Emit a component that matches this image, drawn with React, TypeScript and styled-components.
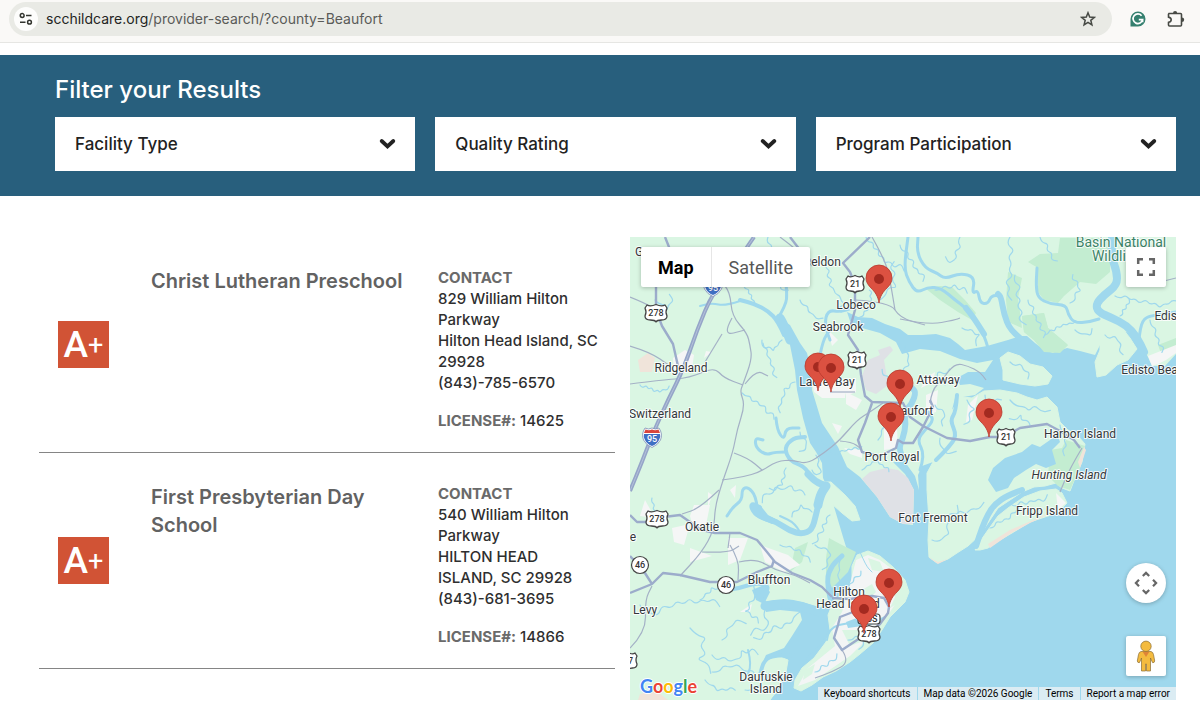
import React from "react";
import styled, { createGlobalStyle, css } from "styled-components";

const GlobalStyle = createGlobalStyle`
  *, *::before, *::after { box-sizing: border-box; }
  body {
    margin: 0;
    background: #fff;
    color: #2f2f2f;
    font-family: Inter, "Open Sans", sans-serif;
  }
`;

/* ---------- Browser toolbar ---------- */

const Toolbar = styled.header`
  display: flex;
  align-items: center;
  height: 43px;
  padding: 0 14px 4px 9px;
  background: #faf9f7;
  border-bottom: 1px solid #e6e6e3;
`;

const AddressBar = styled.div`
  flex: 1;
  display: flex;
  align-items: center;
  height: 34px;
  padding: 0 14px 0 5px;
  border-radius: 17px;
  background: #e9eae5;
`;

const IconButton = styled.button<{ $size?: number; $fill?: string }>`
  display: flex;
  align-items: center;
  justify-content: center;
  width: ${(p) => p.$size ?? 20}px;
  height: ${(p) => p.$size ?? 20}px;
  padding: 0;
  border: 0;
  border-radius: 50%;
  background: ${(p) => p.$fill ?? "transparent"};
  cursor: pointer;
`;

const Address = styled.a`
  flex: 1;
  margin-left: 8px;
  color: #5a5b58;
  font-size: 14px;
  line-height: 20px;
  text-decoration: none;
`;

const Domain = styled.span`
  color: #232422;
`;

const Extensions = styled.div`
  display: flex;
  gap: 18px;
  margin-left: 16px;
`;

/* ---------- Filters ---------- */

const FilterBand = styled.section`
  margin-top: 12px;
  padding: 20px 24px 25px 55px;
  background: #285f7d;
`;

const FilterTitle = styled.h2`
  margin: 0 0 12px;
  color: #fff;
  font-size: 24px;
  font-weight: 500;
  line-height: 30px;
`;

const FilterGrid = styled.div`
  display: grid;
  grid-template-columns: repeat(3, 1fr);
  gap: 20px;
`;

const Field = styled.label`
  position: relative;
  display: block;

  svg {
    position: absolute;
    top: 21px;
    right: 19px;
    pointer-events: none;
  }
`;

const Select = styled.select`
  display: block;
  width: 100%;
  height: 54px;
  padding: 0 48px 0 20px;
  border: 0;
  border-radius: 0;
  background: #fff;
  color: #222;
  font-family: inherit;
  font-size: 17px;
  font-weight: 500;
  appearance: none;
`;

/* ---------- Results ---------- */

const Main = styled.main`
  display: grid;
  grid-template-columns: 576fr 546fr;
  gap: 15px;
  padding: 41px 24px 2px 39px;
`;

const Facility = styled.article`
  display: grid;
  grid-template-columns: 112px 1fr 177px;
  border-bottom: 1px solid #858585;
`;

const Grade = styled.div`
  align-self: center;
  display: flex;
  align-items: center;
  justify-content: center;
  width: 51px;
  height: 47px;
  margin-left: 19px;
  background: #d15335;
  color: #fff;
  font-family: Roboto, sans-serif;
  font-size: 37px;
  font-weight: 500;
  line-height: 47px;
`;

const Plus = styled.span`
  font-size: 27px;
  font-weight: 400;
  line-height: 40px;
`;

const FacilityName = styled.h3`
  margin: 0;
  padding: 30px 24px 0 0;
  color: #626262;
  font-size: 20px;
  font-weight: 600;
  line-height: 28px;
`;

const Contact = styled.address`
  padding: 30px 0 21px;
  font-size: 15px;
  font-style: normal;
  font-weight: 500;
  line-height: 21px;
  white-space: nowrap;
`;

const Caption = styled.strong`
  color: #6a6a6a;
  font-weight: 700;
`;

const Line = styled.div``;

const Phone = styled.a`
  color: inherit;
  text-decoration: none;
`;

const License = styled.div`
  margin-top: 17px;
`;

/* ---------- Map ---------- */

const MapPane = styled.section`
  position: relative;
  min-height: 463px;
  overflow: hidden;
  background: #9fd8ed;
  font-family: Roboto, sans-serif;
`;

const MapDrawing = styled.svg`
  position: absolute;
  inset: 0;
  width: 100%;
  height: 100%;
`;

const floating = css`
  position: absolute;
  border: 0;
  background: #fff;
  box-shadow: 0 1px 4px rgba(0, 0, 0, 0.25);
`;

const TypeSwitch = styled.div`
  ${floating}
  top: 10px;
  left: 11px;
  display: flex;
  border-radius: 2px;
`;

const TypeButton = styled.button<{ $active?: boolean }>`
  height: 40px;
  padding: 0 17px;
  border: 0;
  border-left: ${(p) => (p.$active ? "0" : "1px solid #e6e6e6")};
  background: none;
  color: ${(p) => (p.$active ? "#000" : "#565656")};
  font-family: inherit;
  font-size: 18px;
  font-weight: ${(p) => (p.$active ? 700 : 400)};
`;

const MapControl = styled.button<{ $round?: boolean }>`
  ${floating}
  right: 10px;
  display: flex;
  align-items: center;
  justify-content: center;
  width: 40px;
  height: 40px;
  padding: 0;
  border-radius: ${(p) => (p.$round ? "50%" : "2px")};
`;

const FullscreenControl = styled(MapControl)`
  top: 10px;
`;

const PanControl = styled(MapControl)`
  bottom: 97px;
`;

const PegmanControl = styled(MapControl)`
  bottom: 24px;
`;

const Brand = styled.a`
  position: absolute;
  bottom: 2px;
  left: 10px;
  font-family: Lato, sans-serif;
  font-size: 18px;
  font-weight: 700;
  line-height: 24px;
  text-decoration: none;
  text-shadow: 1px 0 #fff, -1px 0 #fff, 0 1px #fff, 0 -1px #fff;
`;

const BrandLetter = styled.span<{ $tone: string }>`
  color: ${(p) => p.$tone};
`;

const MapFooter = styled.footer`
  position: absolute;
  right: 0;
  bottom: 0;
  display: flex;
  gap: 1px;
  font-size: 10px;
  line-height: 13px;
  color: #000;
`;

const footerItem = css`
  padding: 0 6px;
  border: 0;
  background: rgba(245, 245, 245, 0.7);
  color: inherit;
  font: inherit;
  text-decoration: none;
`;

const FooterButton = styled.button`
  ${footerItem}
`;
const FooterText = styled.span`
  ${footerItem}
`;
const FooterLink = styled.a`
  ${footerItem}
`;

const PlaceLabel = styled.text<{ $tone?: string; $italic?: boolean; $size?: number }>`
  fill: ${(p) => p.$tone ?? "#33373a"};
  stroke: #fff;
  stroke-width: 2px;
  stroke-opacity: 0.85;
  paint-order: stroke;
  stroke-linejoin: round;
  font-family: Roboto, sans-serif;
  font-size: ${(p) => p.$size ?? 12}px;
  font-style: ${(p) => (p.$italic ? "italic" : "normal")};
  text-anchor: middle;
`;

const ShieldText = styled.text<{ $light?: boolean }>`
  fill: ${(p) => (p.$light ? "#fff" : "#333")};
  font-family: Roboto, sans-serif;
  font-size: 9px;
  font-weight: 500;
  text-anchor: middle;
`;

/* ---------- Geography ---------- */

type Pt = [number, number];

const parse = (s: string): Pt[] =>
  s.trim().split(/\s+/).map((p) => p.split(",").map(Number) as Pt);

const r1 = (n: number) => Math.round(n * 10) / 10;

/* Open curve that runs through the midpoints of the polyline. */
const curve = (pts: Pt[]): string => {
  let d = `M${pts[0][0]},${pts[0][1]}`;
  for (let i = 1; i < pts.length - 1; i++) {
    const mx = r1((pts[i][0] + pts[i + 1][0]) / 2);
    const my = r1((pts[i][1] + pts[i + 1][1]) / 2);
    d += `Q${pts[i][0]},${pts[i][1]} ${mx},${my}`;
  }
  const last = pts[pts.length - 1];
  return d + `L${last[0]},${last[1]}`;
};

/* Straight segments with rounded joins, for roads with sharp bends. */
const line = (pts: Pt[]): string => "M" + pts.map((p) => p.join(",")).join("L");

/* Adds alternating side steps to a polyline, as a tidal creek has. */
const meander = (pts: Pt[], amp: number, seed: number): Pt[] => {
  let state = seed * 9301 + 49297;
  const rnd = () => {
    state = (state * 1103515245 + 12345) % 2147483648;
    return state / 2147483648;
  };
  const out: Pt[] = [pts[0]];
  let side = 1;
  for (let i = 0; i < pts.length - 1; i++) {
    const [ax, ay] = pts[i];
    const [bx, by] = pts[i + 1];
    const len = Math.hypot(bx - ax, by - ay) || 1;
    const n = Math.max(1, Math.round(len / (amp * 1.6)));
    for (let k = 1; k <= n; k++) {
      const t = k / n;
      const o = side * amp * (0.3 + rnd() * 0.9);
      side = -side;
      out.push([
        r1(ax + (bx - ax) * t - ((by - ay) / len) * o),
        r1(ay + (by - ay) * t + ((bx - ax) / len) * o),
      ]);
    }
  }
  return out;
};

const poly = (s: string) => "M" + parse(s).map((p) => p.join(",")).join("L") + "Z";

const WATER = "#9fd8ed";
const LAND = "#daf6e3";
const PARK = "#c3edd1";

const waterAreas = [
  // sound and ocean
  "847,312 858,317 872,318 885,324 900,329 908,335 922,335 936,334 950,338 958,344 965,350 987,346 1008,340 1020,336 1027,336 1035,343 1044,350 1053,353 1067,348 1080,351 1095,355 1100,345 1118,330 1137,335 1141,345 1148,357 1152,366 1165,366 1176,354 1176,700 770,700 777,692 784,676 788,662 793,652 806,640 817,628 826,616 827,600 829,580 838,562 847,550 843,537 835,510 830,493 823,478 822,463 816,452 810,443 803,418 797,390 795,370 790,345 785,333 778,323 780,318 790,325 800,343 807,353 811,370 812,390 822,423 838,447 847,467 860,477 877,497 890,517 903,524 913,525 914,490 905,474 893,462 905,462 915,476 919,490 918,475 922,466 933,462 945,452 950,440 957,425 952,410 955,398 963,397 975,395 984,388 970,384 960,385 957,378 968,372 985,372 993,360 977,363 960,359 940,351 920,349 902,354 896,342 880,333 862,328 850,321",
  // Calibogue Sound
  "763,602 775,600 787,600 803,602 820,608 830,598 832,625 820,645 808,656 797,675 793,688 777,692 760,668 766,655 784,648 792,636 802,620 800,612 780,610 766,612",
];

const landAreas = [
  // St Helena, Harbor and Hunting islands
  "927,490 927,473 933,462 945,450 950,436 955,425 951,412 957,403 956,396 963,397 972,398 984,391 1000,390 1017,393 1027,397 1037,400 1047,397 1057,407 1060,422 1068,430 1077,435 1085,444 1082,462 1075,478 1070,491 1062,488 1056,483 1045,486 1034,487 1022,492 1010,500 998,508 990,520 980,535 968,546 957,553 948,559 937,563 929,557 928,540 929,520",
  // Fripp
  "975,550 981,540 988,530 998,516 1008,508 1024,497 1040,491 1056,489 1062,493 1067,503 1057,513 1030,522 1012,533 1000,540 988,548 980,550",
  // Morgan
  "1000,358 1008,352 1020,356 1030,364 1043,367 1052,376 1048,384 1035,386 1020,384 1003,380 1003,370",
  "1101,320 1112,320 1122,328 1130,338 1137,349 1128,360 1117,365 1106,375 1097,377 1095,362 1100,350 1100,335",
  "1062,330 1074,323 1090,322 1099,322 1099,340 1095,353 1080,347 1068,345",
  // Lemon
  "823,482 831,482 845,495 855,506 860,520 852,521 842,513 832,504 826,496",
  // Hilton Head
  "857,555 868,551 880,556 893,567 905,580 909,592 905,602 890,617 882,630 873,643 860,654 850,662 836,671 823,677 812,685 801,691 794,688 795,680 802,668 814,658 826,642 830,630 828,615 834,600 846,592 852,580 852,566",
  // Daufuskie
  "735,672 750,665 765,660 780,657 788,660 786,672 779,686 770,700 740,700 736,686",
  "778,520 790,533 808,534 816,522 820,507 828,510 835,520 839,535 847,550 835,562 828,578 828,600 818,603 790,598 768,600 758,590 760,560",
];

const rivers: [string, number][] = [
  ["1112,237 1111,256 1117,272 1117,285 1104,295 1096,304 1098,312 1112,318 1126,325 1137,337 1144,352", 8],
  ["1176,312 1152,315 1142,320 1139,338", 3],
  ["1099,319 1090,322 1074,323 1068,314 1066,305 1050,304 1038,298 1036,286 1037,268", 3],
  ["1020,338 1010,330 1004,314 1001,297 998,294", 6],
  ["1000,296 992,294 988,304 980,303 978,290 972,294 975,277 960,273 945,279 937,273 925,268 917,253 918,237", 3],
  ["988,348 984,334 974,318 966,308 955,300 941,288 928,287 917,293 909,282 904,268 908,237", 3],
  ["984,334 974,318 966,308", 6],
  ["784,335 778,321 768,311 755,304 740,300", 4],
  ["790,340 784,325 780,318", 9],
  ["777,320 786,305 787,293 785,275", 3],
  ["740,301 725,306 712,303 700,306", 2],
  ["830,340 824,325 828,310 840,312 852,308", 3],
  ["820,355 823,340 830,330", 3],
  ["826,484 817,483 808,472 803,466 790,461 784,448 793,438 805,437", 4],
  ["826,486 817,483 808,474", 7],
  ["785,452 775,452 766,455 756,448 755,438 763,440", 3],
  ["818,505 820,495 826,486", 9],
  ["819,502 816,515 812,530 802,534 790,531 777,522 764,518 755,513 751,504 759,508", 6],
  ["757,507 756,496 748,487 742,489 742,500 733,507 727,516", 3],
  ["800,532 795,523 780,516", 2],
  ["776,418 777,430 784,440 786,428 799,428", 3],
  ["764,602 759,597 768,590 767,585 755,583 740,588 726,590", 4],
  ["820,612 800,606 785,603 765,606", 9],
  ["830,598 826,580 832,565 842,556", 5],
  ["793,655 775,655 764,660 760,675", 4],
  ["748,650 752,665 745,680", 2],
  ["905,462 898,450 903,438 906,424 904,412 912,404 916,392 912,388", 6],
  ["920,470 925,455 917,440 925,430 934,420 928,412", 3],
  ["1022,490 1008,495 995,504 988,514 982,528 976,546", 6],
  ["957,395 956,412 950,420 957,436 948,448 936,460", 4],
  ["827,640 828,628 850,622 868,626 885,617", 2],
  ["860,552 866,566 872,572", 1],
];

const creeks: [string, number][] = [
  ["1040,237 1048,250 1056,262", 3],
  ["1010,237 1010,270 1008,300", 4],
  ["960,237 955,262 945,258", 3],
  ["900,245 912,262 925,280", 3],
  ["935,290 955,287 968,290", 3],
  ["1015,275 1020,300 1022,325", 4],
  ["1045,335 1060,326 1076,322", 2],
  ["1028,300 1038,320 1045,337", 3],
  ["1070,303 1080,290 1072,275", 3],
  ["1115,296 1135,300 1160,306 1176,300", 3],
  ["1120,316 1130,300", 2],
  ["1150,320 1158,340 1163,352", 3],
  ["1105,335 1118,340 1122,355", 3],
  ["1075,330 1085,336 1093,330", 3],
  ["1010,362 1025,368 1030,378", 3],
  ["962,328 980,335 975,345", 3],
  ["866,237 885,262 905,268", 3],
  ["880,300 895,285 892,262", 4],
  ["826,262 830,285 842,300 840,312", 3],
  ["860,317 872,305 870,290", 2],
  ["800,300 812,315 822,320", 3],
  ["768,237 772,255 776,280 786,292", 3],
  ["755,304 748,290 738,280", 2],
  ["762,340 770,360 775,378", 3],
  ["782,340 772,350 762,345", 2],
  ["795,382 785,390 778,412", 3],
  ["742,393 760,405 775,418", 3],
  ["800,432 807,445 800,452", 3],
  ["812,470 820,475 818,455", 3],
  ["786,468 782,485 770,490", 3],
  ["805,495 790,487 775,487 760,500", 4],
  ["812,512 800,505 790,515", 3],
  ["830,515 822,530 815,545", 3],
  ["780,545 800,550 812,560", 3],
  ["755,583 756,596 745,612 760,620", 3],
  ["800,612 790,622 775,628 755,640", 4],
  ["765,610 768,628 750,632", 4],
  ["690,628 705,640 700,660 712,672", 5],
  ["712,672 730,665 745,668 757,678", 4],
  ["712,655 735,662 742,650 758,650", 4],
  ["640,605 650,615 670,605 690,600 720,602", 4],
  ["722,640 730,625 745,620", 4],
  ["705,680 718,690 735,688", 3],
  ["745,690 760,685 770,675", 3],
  ["700,600 712,588 730,590", 3],
  ["815,545 830,550 824,570", 3],
  ["840,560 838,580 850,590", 3],
  ["822,440 835,455 845,450 862,448", 2],
  ["862,470 875,460 890,470", 2],
  ["878,440 884,425 880,415", 3],
  ["900,385 890,380 880,372", 3],
  ["905,345 910,360 902,372", 3],
  ["945,385 935,375 950,370", 3],
  ["962,378 975,380 990,378", 2],
  ["935,405 945,412 940,425", 3],
  ["967,400 975,410 965,425", 4],
  ["985,395 990,405 1000,398", 3],
  ["1010,400 1022,410 1035,408 1050,412", 4],
  ["1030,425 1020,415 1010,420", 3],
  ["940,438 940,450 955,455", 4],
  ["932,540 945,540 948,520 960,508", 4],
  ["950,518 965,512 985,506", 4],
  ["990,528 1005,520 1018,508", 3],
  ["1012,505 1030,502 1048,498", 3],
  ["1060,425 1066,440 1062,455", 3],
  ["840,600 850,585 862,572", 3],
  ["848,640 865,636 862,650", 3],
  ["815,672 830,662 838,655", 3],
  ["655,300 668,310 672,295", 3],
  ["652,498 654,512", 2],
  ["640,385 660,392 670,388", 2],
];

const marshWater = [
  "988,480 993,468 1005,458 1022,452 1032,444 1040,447 1050,440 1057,434 1060,442 1052,450 1056,464 1046,468 1036,464 1026,470 1014,478 1008,488 996,492",
  "750,508 760,505 768,515 778,520 772,524 758,518",
  "752,590 764,585 770,592 764,604 756,600",
  "846,622 862,616 874,620 862,626 848,628",
];

const parks = [
  "1028,262 1040,254 1058,253 1060,238 1110,238 1110,272 1096,284 1080,282 1064,296 1058,303 1044,300 1038,292 1038,268",
  "925,288 940,286 952,287 965,300 976,313 972,320 958,312 940,300",
  "1008,272 1022,278 1018,298 1020,312 1022,328 1008,322 1006,300",
  "1022,316 1044,313 1048,328 1068,345 1060,353 1044,352 1034,340 1024,332",
  "1158,345 1176,338 1176,348 1162,356",
  "1050,450 1062,448 1066,440 1085,446 1080,468 1070,490 1058,486 1048,476",
  "829,538 840,544 856,552 848,572 832,588 826,574 826,558",
  "795,548 808,542 802,562 790,572",
];

const parishGray = [
  "868,360 880,355 878,350 890,346 893,350 884,360 886,372 888,385 876,394 866,390 862,376",
  "862,479 870,472 886,468 898,470 908,478 914,490 913,524 903,524 890,517 877,497",
];

const townPatches = [
  "812,380 830,378 845,388 845,398 822,398 814,392",
  "842,382 856,378 856,392 846,396",
  "884,412 896,408 898,448 884,450",
  "926,378 935,372 933,382 921,388",
  "926,395 938,390 936,412 926,416",
  "846,392 862,400 856,410 846,404",
  "832,423 842,426 838,434",
  "844,448 862,450 862,458 850,454",
  "968,405 978,395 972,420 966,422",
  "673,358 685,350 694,355 692,368 680,376 674,372",
  "706,351 712,352 704,358",
  "694,505 710,505 706,525 694,530 690,516",
  "672,528 690,524 684,545 674,542",
  "728,538 748,538 740,560 728,565",
  "760,545 788,555 800,565 784,572 765,562",
  "690,548 712,556 690,562",
  "708,508 712,495 708,492",
  "645,500 655,518 640,516",
  "730,490 736,485 735,498",
  "740,612 752,604 750,612",
  "1148,356 1176,345 1176,353 1166,360 1158,364 1152,366",
  "1056,493 1066,503 1058,510",
  "828,330 838,340 832,346",
];

const hiltonTown =
  "856,560 868,555 880,560 896,572 890,590 898,600 890,612 872,634 850,656 815,680 798,686 808,668 835,646 832,628 842,612 848,592";
const hiltonGreens = [
  "868,558 880,562 884,572 872,570",
  "898,585 905,590 900,602 890,608 896,595",
  "842,630 862,630 866,640 850,646",
  "805,670 815,664 812,674 803,680",
  "862,590 872,584 876,592 868,600",
];

const sand = [
  "638,360 648,353 655,358 652,372 640,372",
  "988,544 1010,530 1040,517 1062,508 1030,523 1010,534 990,548",
  "1084,447 1086,450 1080,468 1078,462",
  "928,557 938,562 948,559 938,564",
  "640,694 655,690 668,700 638,700",
];

const minorRoads = [
  "725,286 730,292 732,316 747,333 750,345 752,359 743,384 740,392 745,405 737,430 733,452 722,483 715,507 714,530 702,552 680,576",
  "630,297 645,303 656,310",
  "630,384 660,380 690,378 714,367 724,378 743,385",
  "745,384 756,370 768,376",
  "630,346 650,352 670,366",
  "732,318 722,336 745,330",
  "722,334 705,362",
  "883,403 870,412 857,420 840,440 824,453 807,464 793,460 777,461 760,472 743,477 722,480",
  "734,453 748,458 762,470",
  "719,490 700,508 682,514",
  "840,441 852,442 860,448",
  "630,648 646,632 645,600 652,586",
  "702,552 728,553 739,546",
  "730,545 739,560 738,580",
  "739,562 755,558 775,570 795,575 810,583",
  "930,403 932,390 942,380 955,363 968,366 980,372 986,380",
  "900,319 928,325 955,320 960,318",
  "855,300 890,302 900,318 925,325",
  "872,237 885,260 890,280 895,310",
  "830,392 855,392",
  "1082,448 1070,468 1060,492",
  "842,650 850,662 832,672 815,678",
  "780,237 800,252 812,266",
  "1160,282 1176,278",
  "730,533 728,548",
];

const mainRoads = [
  "665,237 671,252 660,268 656,285 656,310 662,326 673,344 678,366",
  "790,237 800,250 812,262",
  "870,237 843,263 850,272 855,285 855,310 848,335 858,350 861,375 865,396 872,402 903,403 910,417 923,426 947,438 970,441 990,437 1003,437 1020,428 1047,424 1060,431 1074,440 1080,448",
  "872,403 865,423 858,440 862,452 880,456 896,448 898,440 903,443 913,443 923,427 933,407 930,400",
  "630,515 637,522 650,522 664,517 680,515 690,522 702,530 715,533 740,533 757,540 767,552 775,562 792,573 810,580 822,587 832,597",
  "630,593 652,584 663,573 680,575 710,582 737,582 747,577 757,572 772,566 774,560",
  "630,556 643,570 652,584",
  "832,598 850,599 872,596 884,598 889,607 888,613 880,624 870,632 857,640 842,650 834,638 838,625 840,617 853,612 868,606",
];

const interstate = "754,237 740,258 713,292 697,330 684,368 668,400 653,433 642,462 630,491";

/* ---------- Map symbols ---------- */

const Pin = ({ x, y }: { x: number; y: number }) => (
  <g transform={`translate(${x},${y})`}>
    <path
      d="M0,0C-1,-7 -4,-11 -8,-15C-11,-18 -13,-21 -13,-25A13,13 0 0 1 13,-25C13,-21 11,-18 8,-15C4,-11 1,-7 0,0Z"
      fill="#dc5141"
      stroke="#b8392d"
      strokeWidth="0.8"
    />
    <circle cx="0" cy="-24" r="5" fill="#a32a20" />
  </g>
);

const UsShield = ({ x, y, label }: { x: number; y: number; label: string }) => {
  const w = label.length > 2 ? 11 : 9;
  return (
    <g transform={`translate(${x},${y})`}>
      <path
        d={`M${-w + 2},-8Q${-w / 2},-6 0,-8.500Q${w / 2},-6 ${w - 2},-8L${w},-5Q${w - 2},-1 ${w},3Q${w},7 ${w / 2},7Q1,7 0,9Q-1,7 ${-w / 2},7Q${-w},7 ${-w},3Q${-w + 2},-1 ${-w},-5Z`}
        fill="#fff"
        stroke="#444"
        strokeWidth="1.3"
        strokeLinejoin="round"
      />
      <ShieldText y="3">{label}</ShieldText>
    </g>
  );
};

const StateRoute = ({ x, y, label }: { x: number; y: number; label: string }) => (
  <g transform={`translate(${x},${y})`}>
    <circle r="8.5" fill="#fff" stroke="#444" strokeWidth="1.2" />
    <ShieldText y="3">{label}</ShieldText>
  </g>
);

const InterstateShield = ({ x, y }: { x: number; y: number }) => (
  <g transform={`translate(${x},${y})`}>
    <path
      d="M-7,-9Q-3.500,-7 0,-9Q3.500,-7 7,-9Q11,-3 8.500,3Q6,8 0,10.500Q-6,8 -8.500,3Q-11,-3 -7,-9Z"
      fill="#fff"
      stroke="#7d8fb5"
      strokeWidth="0.8"
    />
    <path d="M-8,-3H8Q9,0 7,3Q5,7 0,9Q-5,7 -7,3Q-9,0 -8,-3Z" fill="#3f6fc4" />
    <path d="M-6.500,-7.500Q-3,-6 0,-7.500Q3,-6 6.500,-7.500L8,-4H-8Z" fill="#d9453c" />
    <ShieldText y="5" $light>95</ShieldText>
  </g>
);

const places: { x: number; y: number; name: string; italic?: boolean }[] = [
  { x: 639, y: 256, name: "G" },
  { x: 826, y: 266, name: "eldon" },
  { x: 856, y: 309, name: "Lobeco" },
  { x: 838, y: 331, name: "Seabrook" },
  { x: 681, y: 372, name: "Ridgeland" },
  { x: 827, y: 386, name: "Laurel Bay" },
  { x: 938, y: 384, name: "Attaway" },
  { x: 910, y: 415, name: "Beaufort" },
  { x: 660, y: 418, name: "Switzerland" },
  { x: 892, y: 461, name: "Port Royal" },
  { x: 1080, y: 438, name: "Harbor Island" },
  { x: 1069, y: 479, name: "Hunting Island", italic: true },
  { x: 1047, y: 515, name: "Fripp Island" },
  { x: 933, y: 522, name: "Fort Fremont" },
  { x: 702, y: 531, name: "Okatie" },
  { x: 633, y: 541, name: "e" },
  { x: 769, y: 584, name: "Bluffton" },
  { x: 849, y: 596, name: "Hilton" },
  { x: 848, y: 608, name: "Head Island" },
  { x: 645, y: 614, name: "Levy" },
  { x: 766, y: 681, name: "Daufuskie" },
  { x: 766, y: 693, name: "Island" },
  { x: 1171, y: 320, name: "Edisto" },
  { x: 1156, y: 374, name: "Edisto Beach" },
];

const pins: Pt[] = [
  [879, 303], [818, 391], [831, 392], [900, 408],
  [891, 441], [989, 437], [889, 607], [864, 633],
];

const Geography = () => (
  <MapDrawing viewBox="630 237 546 463" preserveAspectRatio="xMidYMid slice" role="img" aria-label="Map of Beaufort County providers">
    <rect x="0" y="0" width="1900" height="1100" fill={WATER} />
    <rect x="0" y="0" width="1176" height="700" fill={LAND} />
    {parks.slice(0, 5).map((s) => <path key={s} d={poly(s)} fill={PARK} />)}
    {waterAreas.map((s) => <path key={s} d={poly(s)} fill={WATER} />)}
    {landAreas.map((s) => <path key={s} d={poly(s)} fill={LAND} stroke={LAND} strokeWidth="1" strokeLinejoin="round" />)}
    {parks.slice(5).map((s) => <path key={s} d={poly(s)} fill={PARK} />)}
    <path d={poly(parks[3])} fill={PARK} />
    {parishGray.map((s) => <path key={s} d={poly(s)} fill="#dfe1e6" />)}
    {townPatches.map((s) => <path key={s} d={poly(s)} fill="#f5f6f6" />)}
    <path d={poly(hiltonTown)} fill="#f3f5f5" />
    {hiltonGreens.map((s) => <path key={s} d={poly(s)} fill={LAND} />)}
    {sand.map((s) => <path key={s} d={poly(s)} fill="#f0e4da" />)}
    {marshWater.map((s) => <path key={s} d={poly(s)} fill={WATER} />)}
    <g fill="none" stroke={WATER} strokeLinecap="round" strokeLinejoin="round">
      {rivers.map(([s, w]) => <path key={s} d={curve(parse(s))} strokeWidth={w} />)}
      {creeks.map(([s, amp], i) => (
        <path key={s} d={curve(meander(parse(s), amp, i + 3))} strokeWidth={1.2} />
      ))}
    </g>
    <g fill="none" strokeLinejoin="round">
      {minorRoads.map((s) => <path key={s} d={curve(parse(s))} stroke="#a4b1c6" strokeWidth="1.2" />)}
      {mainRoads.map((s) => <path key={s} d={line(parse(s))} stroke="#9caccb" strokeWidth="2.4" />)}
      <path d={curve(parse(interstate))} stroke="#95a5c8" strokeWidth="4" />
      <path d={curve(parse(interstate))} stroke="#b3c1da" strokeWidth="1" />
    </g>
    <UsShield x={656} y={313} label="278" />
    <UsShield x={855} y={284} label="21" />
    <UsShield x={857} y={360} label="21" />
    <UsShield x={1006} y={437} label="21" />
    <UsShield x={657} y={519} label="278" />
    <UsShield x={628} y={661} label="17" />
    <rect x="858" y="614" width="22" height="10" rx="3" fill="#fff" stroke="#444" strokeWidth="1.2" />
    <ShieldText x="869" y="622">BUS</ShieldText>
    <UsShield x={869} y={634} label="278" />
    <StateRoute x={640} y={565} label="46" />
    <StateRoute x={726} y={585} label="46" />
    <InterstateShield x={652} y={437} />
    <InterstateShield x={713} y={286} />
    {places.map((p) => (
      <PlaceLabel key={p.name + p.y} x={p.x} y={p.y} $italic={p.italic}>{p.name}</PlaceLabel>
    ))}
    <PlaceLabel x={1121} y={247} $tone="#3c8468" $size={14}>Basin National</PlaceLabel>
    <PlaceLabel x={1121} y={261} $tone="#3c8468" $size={14}>Wildlife R</PlaceLabel>
    {pins.map(([x, y]) => <Pin key={`${x}-${y}`} x={x} y={y} />)}
  </MapDrawing>
);

/* ---------- Icons ---------- */

const TuneIcon = () => (
  <svg width="14" height="14" viewBox="0 0 14 14" fill="none" stroke="#33352f" strokeWidth="1.5">
    <circle cx="3.2" cy="3.5" r="1.9" />
    <path d="M7,3.500H12.500M1,10.200H6.500" />
    <circle cx="10.5" cy="10.2" r="1.9" />
  </svg>
);

const StarIcon = () => (
  <svg width="16" height="16" viewBox="0 0 16 16" fill="none" stroke="#474a45" strokeWidth="1.5">
    <path d="M8,1.800L9.700,6.100L14.300,6.400L10.800,9.300L11.900,13.800L8,11.300L4.100,13.800L5.200,9.300L1.700,6.400L6.300,6.100Z" />
  </svg>
);

const GrammarlyIcon = () => (
  <svg width="16" height="16" viewBox="0 0 16 16">
    <path d="M8,0.500A7.500,7.500 0 1 1 8,15.500H0.500V8A7.500,7.500 0 0 1 8,0.500Z" fill="#35806f" />
    <path d="M11.600,4.700A4.800,4.800 0 1 0 12.600,8.700H8.800M12.600,8.200V11.200" fill="none" stroke="#fff" strokeWidth="1.7" />
  </svg>
);

const PuzzleIcon = () => (
  <svg width="18" height="18" viewBox="0 0 18 18" fill="#474a45">
    <path
      d="M2,3.500H13.500Q14.500,3.500 14.500,4.500V15Q14.500,16 13.500,16H2.500Q1.500,16 1.500,15V12.300Q4.200,11.800 4.200,9.700Q4.200,7.600 1.500,7.100V4.300Z"
      fill="none"
      stroke="#474a45"
      strokeWidth="1.6"
    />
    <path d="M6,3.200A2.100,2.300 0 0 1 10.200,3.200ZM14.800,7.400A2.300,2.200 0 0 1 14.800,12Z" />
  </svg>
);

const ChevronIcon = () => (
  <svg width="17" height="12" viewBox="0 0 17 12" fill="none" stroke="#222" strokeWidth="3.8">
    <path d="M2.700,3L8.500,8.400L14.300,3" strokeLinecap="round" />
  </svg>
);

const FullscreenIcon = () => (
  <svg width="20" height="20" viewBox="0 0 20 20" fill="none" stroke="#666" strokeWidth="2.5">
    <path d="M2.200,7V2.200H7M13,2.200H17.800V7M17.800,13V17.800H13M7,17.800H2.200V13" />
  </svg>
);

const PanIcon = () => (
  <svg width="24" height="24" viewBox="0 0 24 24" fill="none" stroke="#666" strokeWidth="2.2">
    <path d="M8.800,5L12,1.900L15.200,5M8.800,19L12,22.100L15.200,19M5,8.800L1.900,12L5,15.200M19,8.800L22.100,12L19,15.200" />
  </svg>
);

const PegmanIcon = () => (
  <svg width="20" height="32" viewBox="0 0 20 32" fill="#f4bb3f" stroke="#8a6d35" strokeWidth="0.7">
    <path d="M5,11.500Q3,12 2.500,14.500L1.300,21Q1.500,23 3.500,22.600L5.500,18V31H9.500V24H10.500V31H14.500V18L16.500,22.600Q18.500,23 18.700,21L17.500,14.500Q17,12 15,11.500Z" />
    <path d="M6.500,11.500H13.500L10,17Z" fill="#df8437" stroke="none" />
    <circle cx="10" cy="6.3" r="5.2" />
  </svg>
);

/* ---------- Page ---------- */

const filters = ["Facility Type", "Quality Rating", "Program Participation"];

const facilities = [
  {
    name: "Christ Lutheran Preschool",
    address: ["829 William Hilton", "Parkway", "Hilton Head Island, SC", "29928"],
    phone: "(843)-785-6570",
    license: "14625",
  },
  {
    name: "First Presbyterian Day School",
    address: ["540 William Hilton", "Parkway", "HILTON HEAD", "ISLAND, SC 29928"],
    phone: "(843)-681-3695",
    license: "14866",
  },
];

const brandLetters: [string, string][] = [
  ["G", "#4285f4"], ["o", "#ea4335"], ["o", "#fbbc05"],
  ["g", "#4285f4"], ["l", "#34a853"], ["e", "#ea4335"],
];

export default function App() {
  return (
    <>
      <GlobalStyle />
      <Toolbar>
        <AddressBar>
          <IconButton type="button" $size={24} $fill="#fdfdfc" aria-label="Site information"><TuneIcon /></IconButton>
          <Address href="#"><Domain>scchildcare.org</Domain>/provider-search/?county=Beaufort</Address>
          <IconButton type="button" aria-label="Bookmark this page"><StarIcon /></IconButton>
        </AddressBar>
        <Extensions>
          <IconButton type="button" aria-label="Grammarly"><GrammarlyIcon /></IconButton>
          <IconButton type="button" aria-label="Extensions"><PuzzleIcon /></IconButton>
        </Extensions>
      </Toolbar>

      <FilterBand>
        <FilterTitle>Filter your Results</FilterTitle>
        <FilterGrid>
          {filters.map((name) => (
            <Field key={name}>
              <Select aria-label={name} defaultValue="">
                <option value="">{name}</option>
              </Select>
              <ChevronIcon />
            </Field>
          ))}
        </FilterGrid>
      </FilterBand>

      <Main>
        <section aria-label="Providers">
          {facilities.map((f) => (
            <Facility key={f.license}>
              <Grade>A<Plus>+</Plus></Grade>
              <FacilityName>{f.name}</FacilityName>
              <Contact>
                <Caption>CONTACT</Caption>
                {f.address.map((row) => <Line key={row}>{row}</Line>)}
                <Phone href={`tel:${f.phone}`}>{f.phone}</Phone>
                <License><Caption>LICENSE#:</Caption> {f.license}</License>
              </Contact>
            </Facility>
          ))}
        </section>

        <MapPane aria-label="Map">
          <Geography />
          <TypeSwitch>
            <TypeButton type="button" $active>Map</TypeButton>
            <TypeButton type="button">Satellite</TypeButton>
          </TypeSwitch>
          <FullscreenControl type="button" aria-label="Toggle fullscreen"><FullscreenIcon /></FullscreenControl>
          <PanControl type="button" $round aria-label="Pan the map"><PanIcon /></PanControl>
          <PegmanControl type="button" aria-label="Street View"><PegmanIcon /></PegmanControl>
          <Brand href="#" aria-label="Google">
            {brandLetters.map(([c, tone], i) => <BrandLetter key={i} $tone={tone}>{c}</BrandLetter>)}
          </Brand>
          <MapFooter>
            <FooterButton type="button">Keyboard shortcuts</FooterButton>
            <FooterText>Map data ©2026 Google</FooterText>
            <FooterLink href="#">Terms</FooterLink>
            <FooterLink href="#">Report a map error</FooterLink>
          </MapFooter>
        </MapPane>
      </Main>
    </>
  );
}
